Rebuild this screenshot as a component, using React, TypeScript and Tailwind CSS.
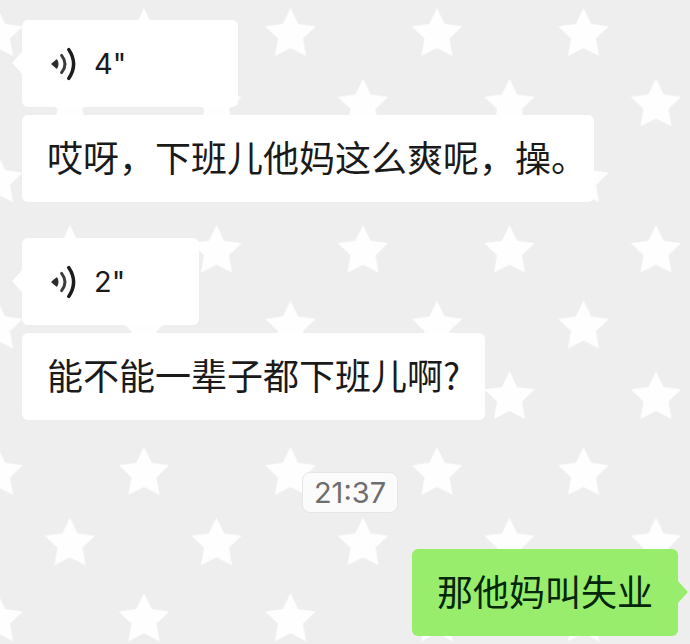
import type { ReactNode } from 'react';

type Message =
  | { kind: 'voice'; seconds: number; transcript: string }
  | { kind: 'time'; label: string }
  | { kind: 'sent'; text: string };

const MESSAGES: Message[] = [
  { kind: 'voice', seconds: 4, transcript: '哎呀，下班儿他妈这么爽呢，操。' },
  { kind: 'voice', seconds: 2, transcript: '能不能一辈子都下班儿啊?' },
  { kind: 'time', label: '21:37' },
  { kind: 'sent', text: '那他妈叫失业' },
];

// voice bubbles grow with the length of the recording
const VOICE_WIDTHS: Record<number, string> = {
  2: 'w-[177px]',
  4: 'w-[216px]',
};

const STAR = 'M0 -26.5 L7.6 -10.5 L25.2 -8.2 L12.4 4 L15.6 21.4 L0 13.5 L-15.6 21.4 L-12.4 4 L-25.2 -8.2 L-7.6 -10.5 Z';

function Wallpaper() {
  return (
    <svg className="absolute inset-0 w-full h-full" aria-hidden="true">
      <defs>
        <pattern id="stars" x="33.5" y="-2" width="146.5" height="146.3" patternUnits="userSpaceOnUse">
          <path d={STAR} transform="translate(110.5 36.5)" fill="#fefefe" />
          <path d={STAR} transform="translate(36.5 107)" fill="#fefefe" />
        </pattern>
      </defs>
      <rect width="100%" height="100%" fill="url(#stars)" />
    </svg>
  );
}

function VoiceIcon() {
  return (
    <svg width="26" height="34" viewBox="0 0 26 34" fill="none" stroke="#1c1c1c" strokeLinecap="round" aria-hidden="true">
      <path d="M2.4 17 L6.6 13.4 Q8.4 17 6.6 20.6 Z" fill="#2b2b2b" stroke="#2b2b2b" strokeWidth="2" strokeLinejoin="round" />
      <path d="M11.6 8.4 Q18.4 17 11.6 25.6" stroke="#3c3c3c" strokeWidth="3" />
      <path d="M18.8 2.6 Q28.4 17 18.8 31.4" strokeWidth="3.5" />
    </svg>
  );
}

function Tail({ side }: { side: 'left' | 'right' }) {
  return side === 'left' ? (
    <svg className="absolute right-full top-8 text-white" width="10" height="22" viewBox="0 0 10 22" aria-hidden="true">
      <path d="M10 0 L1 10 Q0 11 1 12 L10 22 Z" fill="currentColor" />
    </svg>
  ) : (
    <svg className="absolute left-full top-8 text-[#98ed6c]" width="10" height="22" viewBox="0 0 10 22" aria-hidden="true">
      <path d="M0 0 L9 10 Q10 11 9 12 L0 22 Z" fill="currentColor" />
    </svg>
  );
}

function TextBubble({ children }: { children: ReactNode }) {
  return <p className="max-w-full rounded-md bg-white px-[25px] pt-[18px] pb-[22px]">{children}</p>;
}

// a closing full stop takes half a character at the end of a bubble
function Transcript({ text }: { text: string }) {
  if (!text.endsWith('。')) return <>{text}</>;
  return (
    <>
      {text.slice(0, -1)}
      <span className="[font-feature-settings:'halt']">。</span>
    </>
  );
}

function VoiceMessage({ seconds, transcript }: { seconds: number; transcript: string }) {
  return (
    <div className="flex flex-col items-start gap-2">
      <button
        type="button"
        aria-label={`${seconds}"`}
        className={`relative flex items-center gap-[18px] rounded-md bg-white px-7 py-5 font-['Inter',sans-serif] text-[29px] ${VOICE_WIDTHS[seconds]}`}
      >
        <Tail side="left" />
        <VoiceIcon />
        <span className="leading-[47px]">{seconds}"</span>
      </button>
      <TextBubble>
        <Transcript text={transcript} />
      </TextBubble>
    </div>
  );
}

export default function App() {
  return (
    <main className="relative min-h-screen overflow-hidden bg-[#eeeeee] font-['Noto_Sans_CJK_SC',sans-serif] text-[36px] leading-[47px] text-[#1a1a1a]">
      <Wallpaper />
      <div className="relative flex flex-col gap-9 pt-5 pr-3 pb-2 pl-[22px]">
        {MESSAGES.map((message, i) => {
          if (message.kind === 'voice') {
            return <VoiceMessage key={i} seconds={message.seconds} transcript={message.transcript} />;
          }
          if (message.kind === 'time') {
            return (
              <time
                key={i}
                className="mt-4 self-center rounded-lg border border-[#e6e6e6] bg-[#fbfbfb] px-[11px] font-['Inter',sans-serif] text-[29px] leading-[39px] text-[#6e6e6e]"
              >
                {message.label}
              </time>
            );
          }
          return (
            <p key={i} className="relative self-end rounded-md bg-[#98ed6c] px-[25px] pt-[18px] pb-[22px] text-[#04260a]">
              {message.text}
              <Tail side="right" />
            </p>
          );
        })}
      </div>
    </main>
  );
}
